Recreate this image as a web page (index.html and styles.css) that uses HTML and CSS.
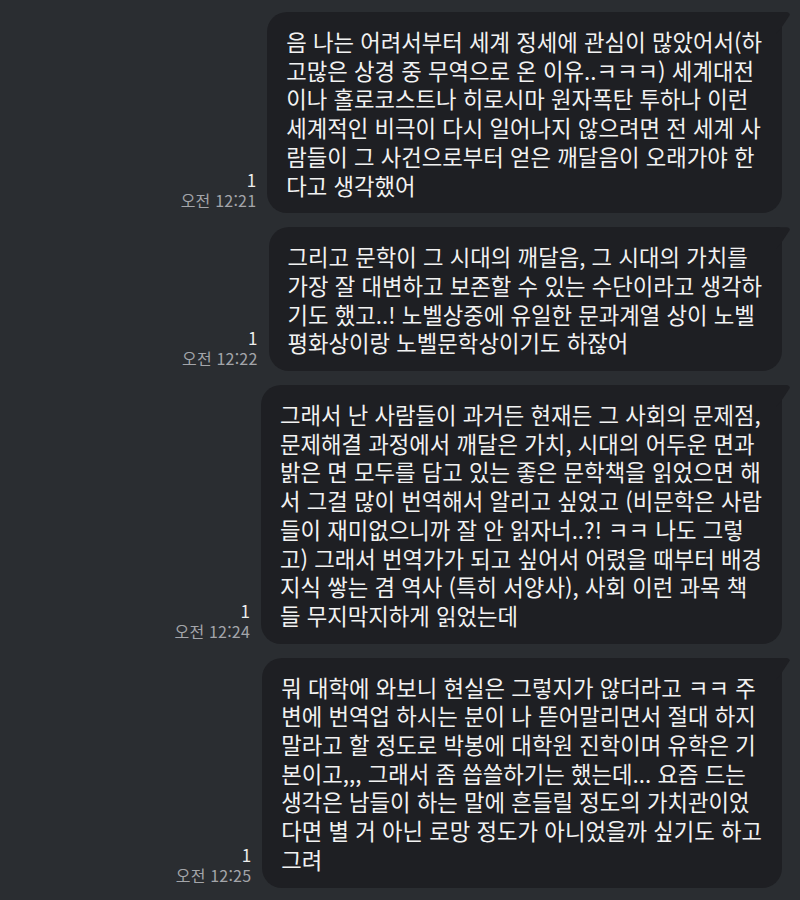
FILE: index.html
```html
<!DOCTYPE html>
<html lang="ko">
<head>
<meta charset="utf-8">
<title>채팅</title>
<link rel="stylesheet" href="styles.css">
</head>
<body>
<main class="chat">
  <div class="row">
    <div class="meta"><span class="unread">1</span><span class="time">오전 12:21</span></div>
    <div class="bubble">음 나는 어려서부터 세계 정세에 관심이 많았어서(하<br>고많은 상경 중 무역으로 온 이유..ㅋㅋㅋ) 세계대전<br>이나 홀로코스트나 히로시마 원자폭탄 투하나 이런<br>세계적인 비극이 다시 일어나지 않으려면 전 세계 사<br>람들이 그 사건으로부터 얻은 깨달음이 오래가야 한<br>다고 생각했어</div>
  </div>
  <div class="row">
    <div class="meta"><span class="unread">1</span><span class="time">오전 12:22</span></div>
    <div class="bubble">그리고 문학이 그 시대의 깨달음, 그 시대의 가치를<br>가장 잘 대변하고 보존할 수 있는 수단이라고 생각하<br>기도 했고..! 노벨상중에 유일한 문과계열 상이 노벨<br>평화상이랑 노벨문학상이기도 하잖어</div>
  </div>
  <div class="row">
    <div class="meta"><span class="unread">1</span><span class="time">오전 12:24</span></div>
    <div class="bubble">그래서 난 사람들이 과거든 현재든 그 사회의 문제점,<br>문제해결 과정에서 깨달은 가치, 시대의 어두운 면과<br>밝은 면 모두를 담고 있는 좋은 문학책을 읽었으면 해<br>서 그걸 많이 번역해서 알리고 싶었고 (비문학은 사람<br>들이 재미없으니까 잘 안 읽자너..?! ㅋㅋ 나도 그렇<br>고) 그래서 번역가가 되고 싶어서 어렸을 때부터 배경<br>지식 쌓는 겸 역사 (특히 서양사), 사회 이런 과목 책<br>들 무지막지하게 읽었는데</div>
  </div>
  <div class="row">
    <div class="meta"><span class="unread">1</span><span class="time">오전 12:25</span></div>
    <div class="bubble">뭐 대학에 와보니 현실은 그렇지가 않더라고 ㅋㅋ 주<br>변에 번역업 하시는 분이 나 뜯어말리면서 절대 하지<br>말라고 할 정도로 박봉에 대학원 진학이며 유학은 기<br>본이고,,, 그래서 좀 씁쓸하기는 했는데... 요즘 드는<br>생각은 남들이 하는 말에 흔들릴 정도의 가치관이었<br>다면 별 거 아닌 로망 정도가 아니었을까 싶기도 하고<br>그려</div>
  </div>
</main>
</body>
</html>
```
FILE: styles.css
```css
html, body {
  margin: 0;
  padding: 0;
  background: #2a2d31;
}

body {
  width: 800px;
  height: 900px;
  overflow: hidden;
  font-family: "Noto Sans CJK KR", "Noto Sans", sans-serif;
}

.chat {
  display: flex;
  flex-direction: column;
  gap: 14px;
  padding: 12px 18px 0 0;
}

.row {
  display: flex;
  justify-content: flex-end;
  align-items: flex-end;
  gap: 11px;
}

.meta {
  display: flex;
  flex-direction: column;
  align-items: flex-end;
  font-size: 16px;
  line-height: 21px;
  padding-bottom: 2px;
}

.unread {
  color: #ededed;
  font-size: 17px;
}

.time {
  color: #a3a5aa;
  letter-spacing: 0.2px;
}

.bubble {
  position: relative;
  background: #1e1f23;
  color: #f2f2f2;
  font-size: 22.3px;
  line-height: 28.7px;
  white-space: nowrap;
  padding: 15px 20px 14px 19px;
  border-radius: 20px 4px 20px 20px;
}

/* speech tail on the top-right corner */
.bubble::after {
  content: "";
  position: absolute;
  top: 0;
  right: -8px;
  width: 14px;
  height: 22px;
  background: #1e1f23;
  border-top-right-radius: 4px;
  clip-path: polygon(0 0, 100% 0, 100% 12%, 40% 70%, 0 100%);
}
```
